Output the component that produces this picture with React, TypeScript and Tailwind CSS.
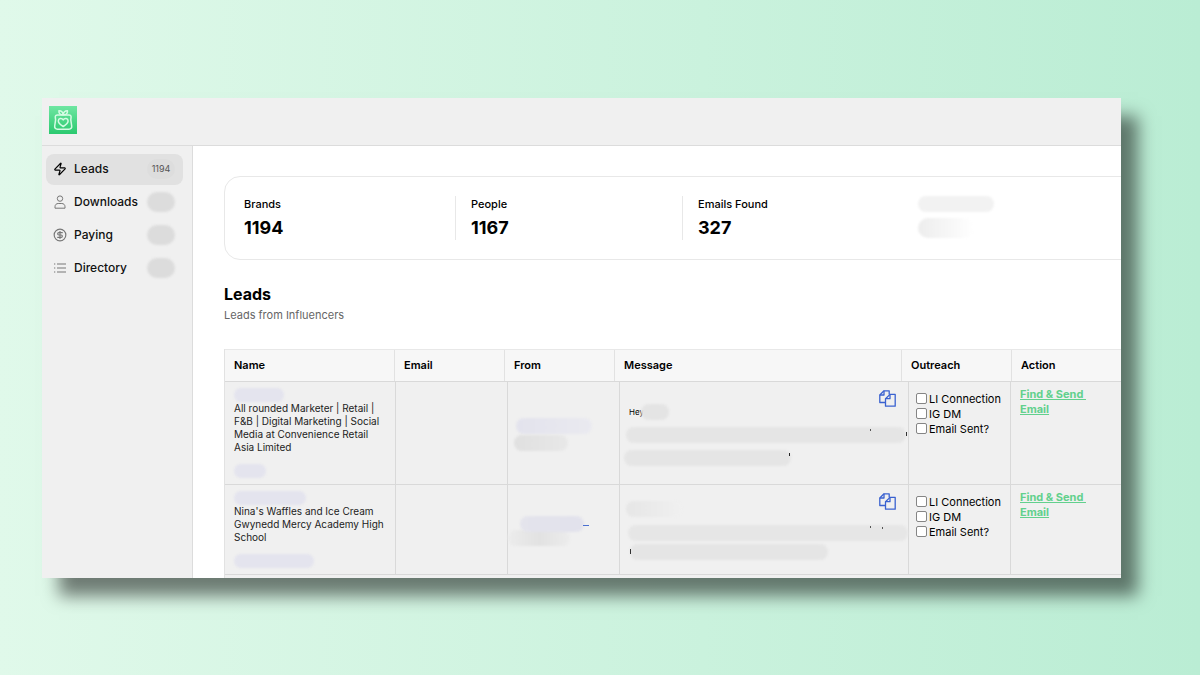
import React from 'react';
import clsx from 'clsx';
import { CircleDollarSign, Zap } from 'lucide-react';

interface NavItem {
  label: string;
  icon: React.ReactNode;
  count?: string;
  active?: boolean;
}

interface Lead {
  id: string;
  description: string;
  nameMask: string;
  linkMask: string;
  fromMasks: string[];
  fromMarks: string[];
  greeting?: string;
  messageMasks: string[];
  messageMarks: string[];
  height: string;
}

const UserIcon = () => (
  <svg viewBox="0 0 14 14" className="h-3.5 w-3.5" fill="none" stroke="currentColor">
    <circle cx="7" cy="3.6" r="2.7" />
    <path d="M2 13.2v-1.4c0-2 1.3-3.3 3.2-3.3h3.6c1.9 0 3.2 1.3 3.2 3.3v1.4z" strokeLinejoin="round" />
  </svg>
);

const ListIcon = () => (
  <svg viewBox="0 0 14 14" className="h-3.5 w-3.5" fill="none" stroke="currentColor">
    <path d="M4 3h9M4 7h9M4 11h9" />
    <path d="M1 3h1.3M1 7h1.3M1 11h1.3" />
  </svg>
);

const CopyIcon = () => (
  <svg
    viewBox="0 0 17 17"
    className="h-[17px] w-[17px]"
    fill="none"
    stroke="currentColor"
    strokeWidth="1.3"
    strokeLinejoin="round"
  >
    <path d="M6.5 12.500H.8V5L5 .8h5.200v3.600" />
    <path d="M.8 5H5V.8" />
    <path d="M6.500 8.700 11 4.400h5.200v11.800H6.500z" />
    <path d="M6.500 8.700H11V4.400" />
  </svg>
);

const Logo = () => (
  <svg viewBox="0 0 28 28" className="h-7 w-7" fill="none" role="img" aria-label="Home">
    <defs>
      <linearGradient id="logo" x1="0" y1="0" x2="0" y2="1">
        <stop offset="0" stopColor="#6fe6a2" />
        <stop offset="1" stopColor="#2bc96f" />
      </linearGradient>
    </defs>
    <rect width="28" height="28" fill="url(#logo)" />
    <g stroke="#d5fbe4" strokeWidth="1.5" strokeLinejoin="round" strokeLinecap="round">
      <path d="M8.500 9h11.400c1.500 0 2.300.8 2.200 2.100l-.3 2.700.9 6.200c.2 2-.8 3.200-2.700 3.200H8.400c-1.900 0-2.900-1.200-2.700-3.200l.9-6.200-.3-2.700C6.200 9.800 7 9 8.500 9z" />
      <path d="M14.200 8.800c-2.500.2-4.600-1-4.300-4 2.400-.1 4 1.500 4.300 4zM14.200 8.800c2.500.2 4.600-1 4.300-4-2.400-.1-4 1.500-4.300 4z" />
      <path d="M14.200 20.500c-2.700-1.600-4.900-3.300-4.900-5.500 0-2.900 3.500-3.500 4.900-1.100 1.400-2.400 4.900-1.800 4.900 1.100 0 2.200-2.200 3.900-4.900 5.500z" />
    </g>
  </svg>
);

const navItems: NavItem[] = [
  {
    label: 'Leads',
    icon: <Zap className="h-3.5 w-3.5 text-black" />,
    count: '1194',
    active: true,
  },
  { label: 'Downloads', icon: <UserIcon /> },
  { label: 'Paying', icon: <CircleDollarSign className="h-3.5 w-3.5" /> },
  { label: 'Directory', icon: <ListIcon /> },
];

const stats = [
  { label: 'Brands', value: '1194' },
  { label: 'People', value: '1167' },
  { label: 'Emails Found', value: '327' },
];

const columns = ['Name', 'Email', 'From', 'Message', 'Outreach', 'Action'];

const outreachSteps = ['LI Connection', 'IG DM', 'Email Sent?'];

const leads: Lead[] = [
  {
    id: 'retail',
    description:
      'All rounded Marketer | Retail |\nF&B | Digital Marketing | Social\nMedia at Convenience Retail\nAsia Limited',
    nameMask: 'w-[50px]',
    linkMask: 'w-8',
    fromMasks: [
      'left-2 top-9 w-[76px] bg-linear-to-r from-[#e3e3ed] to-[#eaeaf0]',
      'left-1.5 top-[53px] w-[54px] bg-linear-to-r from-[#e0e0e0] to-[#e8e8e8]',
    ],
    fromMarks: [],
    greeting: 'Hey',
    messageMasks: [
      'left-[21px] top-[22px] w-7 bg-[#e4e4e4]',
      'left-1.5 top-[45px] w-[280px] bg-[#e5e5e5]',
      'left-1 top-[68px] w-[167px] bg-[#e5e5e5]',
    ],
    messageMarks: [
      'left-[250px] top-[47px] h-0.5 w-px bg-[#555]',
      'left-[286px] top-[50px] h-1 w-px bg-[#333]',
      'left-[169px] top-[71px] h-[3px] w-px bg-[#222]',
    ],
    height: 'h-[103px]',
  },
  {
    id: 'waffles',
    description: "Nina's Waffles and Ice Cream\nGwynedd Mercy Academy High\nSchool",
    nameMask: 'w-[72px]',
    linkMask: 'w-20',
    fromMasks: [
      'left-0 top-[45px] w-[62px] bg-linear-to-r from-[#ececec] via-[#e2e2e2] to-[#ececec]',
      'left-3 top-[31px] w-16 bg-linear-to-r from-[#e4e4ec] to-[#e2e2ec]',
    ],
    fromMarks: ['left-[75px] top-10 h-px w-1.5 bg-[#4a6fd0]'],
    messageMasks: [
      'left-1.5 top-4 w-14 bg-linear-to-r from-[#e6e6e6] to-[#f0f0f0]',
      'left-2 top-10 w-[280px] bg-[#e6e6e6]',
      'left-2.5 top-[59px] w-[198px] bg-[#e5e5e5]',
    ],
    messageMarks: [
      'left-[250px] top-[41px] h-0.5 w-px bg-[#555]',
      'left-[262px] top-[42px] h-0.5 w-px bg-[#555]',
      'left-2.5 top-16 h-[5px] w-px bg-[#333]',
    ],
    height: 'h-[90px]',
  },
];

/**
 * Hides private values behind a soft pill
 */
const Mask: React.FC<{ className: string }> = ({ className }) => (
  <span aria-hidden="true" className={clsx('rounded-full blur-[1px]', className)} />
);

const Sidebar = () => (
  <nav className="w-[151px] shrink-0 border-r border-[#dcdcdc] bg-[#f0f0f0] pt-2 pr-[9px] pl-1">
    <ul className="flex flex-col gap-0.5">
      {navItems.map((item) => (
        <li key={item.label}>
          <a
            href="#"
            className={clsx(
              'flex h-[31px] items-center rounded-lg pr-2 pb-px pl-[7px] text-[12px] font-medium text-[#111]',
              item.active && 'bg-[#e1e1e1]'
            )}
          >
            <span className="mr-[7px] text-[#777]">{item.icon}</span>
            <span className="flex-1">{item.label}</span>
            {item.count ? (
              <span className="flex h-5 w-7 items-center justify-center rounded-full bg-[#dddddd] text-[9px] font-normal text-[#555]">
                {item.count}
              </span>
            ) : (
              <Mask className="h-5 w-7 bg-[#dcdcdc]" />
            )}
          </a>
        </li>
      ))}
    </ul>
  </nav>
);

const Stats = () => (
  <div className="-mr-16 flex rounded-2xl border border-[#e8e8e8] py-[19px] pl-[19px]">
    <dl className="flex gap-[15px]">
      {stats.map((stat) => (
        <div
          key={stat.label}
          className="w-[212px] shrink-0 border-r border-[#e8e8e8] last:border-r-0"
        >
          <dt className="text-[11px] leading-4 font-medium">{stat.label}</dt>
          <dd className="pt-1 text-[18px] leading-6 font-bold">{stat.value}</dd>
        </div>
      ))}
    </dl>
    <div className="flex flex-col gap-1.5 pl-2">
      <Mask className="h-4 w-[76px] bg-[#f2f2f2]" />
      <Mask className="h-5 w-14 bg-linear-to-r from-[#ededed] to-white" />
    </div>
  </div>
);

const LeadRow: React.FC<{ lead: Lead }> = ({ lead }) => (
  <tr
    className={clsx(
      'grid grid-cols-[171px_112px_112px_289px_102px_1fr] border-b border-[#d9d9d9]',
      lead.height
    )}
  >
    <td className="flex flex-col border-r border-[#d9d9d9] pt-1.5 pl-[9px]">
      <Mask className={clsx('h-3.5 shrink-0 bg-[#e4e4ee]', lead.nameMask)} />
      <p className="text-[10px] leading-[13px] whitespace-pre text-[#222]">{lead.description}</p>
      <Mask className={clsx('mt-2.5 h-3.5 shrink-0 bg-[#e4e4ee]', lead.linkMask)} />
    </td>
    <td className="border-r border-[#d9d9d9]" />
    <td className="relative border-r border-[#d9d9d9]">
      {lead.fromMasks.map((mask) => (
        <Mask key={mask} className={clsx('absolute h-4', mask)} />
      ))}
      {lead.fromMarks.map((mark) => (
        <span key={mark} aria-hidden="true" className={clsx('absolute', mark)} />
      ))}
    </td>
    <td className="relative border-r border-[#d9d9d9] pt-2 pr-3 pl-[9px]">
      <button type="button" aria-label="Copy message" className="float-right text-[#3a62d0]">
        <CopyIcon />
      </button>
      {lead.greeting && <p className="pt-4 text-[8px] leading-3">{lead.greeting}</p>}
      {lead.messageMasks.map((mask) => (
        <Mask key={mask} className={clsx('absolute h-4', mask)} />
      ))}
      {lead.messageMarks.map((mark) => (
        <span key={mark} aria-hidden="true" className={clsx('absolute', mark)} />
      ))}
    </td>
    <td className="border-r border-[#d9d9d9] pt-2.5 pl-[7px]">
      {outreachSteps.map((step) => (
        <label
          key={step}
          className="flex h-[15px] items-center gap-0.5 text-[11px] whitespace-nowrap"
        >
          <input
            type="checkbox"
            className="mb-0.5 h-[11px] w-[11px] shrink-0 appearance-none rounded-xs border border-[#858585] bg-white"
          />
          {step}
        </label>
      ))}
    </td>
    <td className="pt-[5px] pl-[9px] text-[11px] leading-[15px] font-bold">
      <a href="#" className="text-[#62d08d] underline">
        Find &amp; Send&nbsp;
        <br />
        Email
      </a>
    </td>
  </tr>
);

export default function App() {
  return (
    <div className="min-h-screen bg-linear-to-r from-[#e0f9ea] to-[#baedd4] pt-[98px] pr-[79px] pb-[97px] pl-[42px] font-['Inter',sans-serif] text-black">
      <div className="overflow-hidden bg-white shadow-[17px_18px_16px_rgba(0,0,0,0.5)]">
        <header className="flex h-12 items-center border-b border-[#dcdcdc] bg-[#f0f0f0] px-[7px] pb-1">
          <Logo />
        </header>
        <div className="flex">
          <Sidebar />
          <main className="min-w-0 flex-1 pt-[30px] pl-[31px]">
            <Stats />
            <h1 className="mt-[22px] text-[16px] leading-6 font-bold">Leads</h1>
            <p className="pt-px text-[11px] leading-4 text-[#666]">Leads from Influencers</p>

            <table className="mt-[26px] block border-l border-[#e2e2e2] bg-[#f0f0f0]">
              <thead className="block">
                <tr className="grid h-[33px] grid-cols-[170px_110px_110px_287px_110px_1fr] border-y border-t-[#e8e8e8] border-b-[#d9d9d9] bg-[#f7f7f7]">
                  {columns.map((column) => (
                    <th
                      key={column}
                      scope="col"
                      className="flex items-center border-r border-[#e2e2e2] pl-[9px] text-[11px] font-semibold last:border-r-0"
                    >
                      {column}
                    </th>
                  ))}
                </tr>
              </thead>
              <tbody className="block pb-[3px]">
                {leads.map((lead) => (
                  <LeadRow key={lead.id} lead={lead} />
                ))}
              </tbody>
            </table>
          </main>
        </div>
      </div>
    </div>
  );
}
